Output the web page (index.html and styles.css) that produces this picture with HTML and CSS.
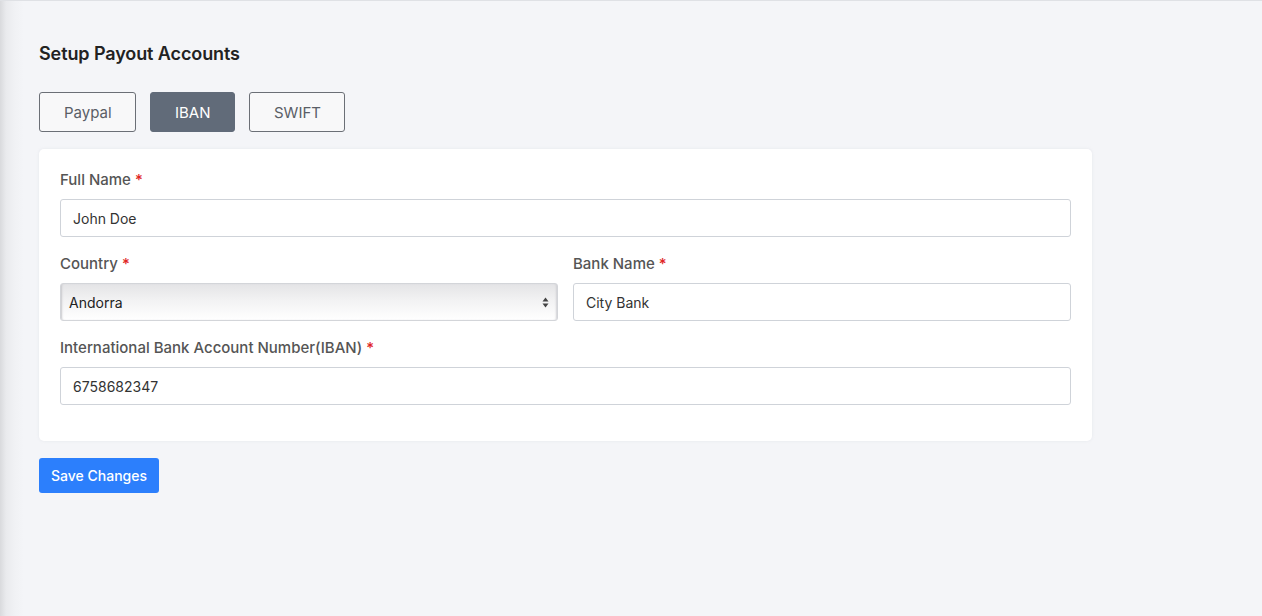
FILE: index.html
```html
<!DOCTYPE html>
<html>
<head>
<meta charset="utf-8">
<link rel="stylesheet" href="styles.css">
</head>
<body>
<div class="page">
  <h1 class="title">Setup Payout Accounts</h1>
  <div class="tabs">
    <button class="tab">Paypal</button>
    <button class="tab active">IBAN</button>
    <button class="tab">SWIFT</button>
  </div>
  <div class="card">
    <div class="field">
      <label class="label">Full Name <span class="req">*</span></label>
      <input class="input" type="text" value="John Doe">
    </div>
    <div class="row">
      <div class="field">
        <label class="label">Country <span class="req">*</span></label>
        <div class="select">
          <span>Andorra</span>
          <svg class="arrows" width="7" height="11" viewBox="0 0 7 11"><path d="M3.5 0.5 L6.5 4.5 H0.5 Z" fill="#444"/><path d="M3.5 10.5 L6.5 6.5 H0.5 Z" fill="#444"/></svg>
        </div>
      </div>
      <div class="field">
        <label class="label">Bank Name <span class="req">*</span></label>
        <input class="input" type="text" value="City Bank">
      </div>
    </div>
    <div class="field">
      <label class="label">International Bank Account Number(IBAN) <span class="req">*</span></label>
      <input class="input" type="text" value="6758682347">
    </div>
  </div>
  <button class="save">Save Changes</button>
</div>
</body>
</html>
```

FILE: styles.css
```css
html, body {
  margin: 0;
  padding: 0;
  height: 100%;
}
body {
  background: #f4f5f8;
  font-family: Inter, "Liberation Sans", sans-serif;
  color: #222;
  border-top: 1px solid #dfe1e5;
  box-sizing: border-box;
  background-image: linear-gradient(to right, #d9dadd 0px, #e9eaed 6px, #f0f1f4 14px, #f4f5f8 24px);
}
.page {
  padding: 42px 0 0 39px;
  width: 1053px;
}
.title {
  margin: 0;
  font-size: 18px;
  font-weight: 600;
  color: #222;
  line-height: 22px;
  letter-spacing: -0.1px;
}
.tabs {
  display: flex;
  gap: 14px;
  margin-top: 27px;
}
.tab {
  height: 40px;
  border: 1px solid #6b6f76;
  border-radius: 3px;
  background: #f8f8f9;
  color: #5a5e66;
  font-family: inherit;
  font-size: 15px;
  padding: 0 24px;
}
.tab:first-child { width: 97px; }
.tab.active {
  background: #616b79;
  border-color: #616b79;
  color: #fff;
  width: 85px;
}
.tab:last-child { width: 96px; }
.card {
  margin-top: 17px;
  background: #fff;
  border-radius: 5px;
  padding: 21px 21px 36px 21px;
  display: flex;
  flex-direction: column;
  gap: 17px;
  box-shadow: 0 0 3px rgba(200, 205, 215, 0.35);
}
.row {
  display: flex;
  gap: 15px;
}
.row .field { flex: 1; min-width: 0; }
.field {
  display: flex;
  flex-direction: column;
  gap: 9px;
}
.label {
  font-size: 15px;
  font-weight: 500;
  color: #555;
  line-height: 20px;
}
.req { color: #e02424; }
.input {
  height: 38px;
  box-sizing: border-box;
  border: 1px solid #cfd3d9;
  border-radius: 3px;
  padding: 0 12px;
  font-family: inherit;
  font-size: 14px;
  color: #333;
  background: #fff;
  width: 100%;
}
.select {
  height: 38px;
  box-sizing: border-box;
  border: 1px solid #d3d5d9;
  border-radius: 3px;
  padding: 0 8px 0 8px;
  display: flex;
  align-items: center;
  justify-content: space-between;
  font-size: 14px;
  color: #222;
  background: linear-gradient(to bottom, #e4e4e6 0%, #f2f2f3 45%, #ffffff 100%);
  box-shadow: inset 2px 0 2px -1px #c8c8cc, inset -2px 0 2px -1px #d0d0d4;
}
.save {
  margin-top: 17px;
  height: 35px;
  width: 120px;
  border: none;
  border-radius: 3px;
  background: #2c7ffc;
  color: #fff;
  font-family: inherit;
  font-size: 14px;
  font-weight: 500;
}
```
